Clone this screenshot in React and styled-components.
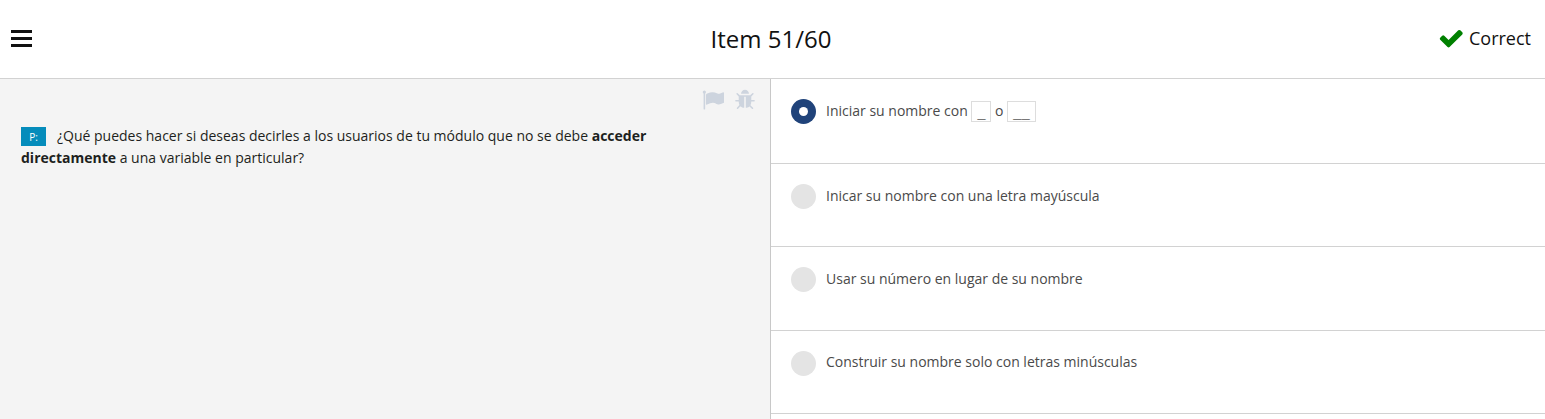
import React from "react";
import styled, { createGlobalStyle } from "styled-components";

const GlobalStyle = createGlobalStyle`
  * { box-sizing: border-box; }
  body {
    margin: 0;
    background: #fff;
    color: #1d1f20;
    font-family: "Open Sans", "Noto Sans", sans-serif;
    overflow: hidden;
  }
`;

const Page = styled.div`
  display: flex;
  flex-direction: column;
  height: 100vh;
`;

const Header = styled.header`
  display: grid;
  grid-template-columns: 1fr auto 1fr;
  align-items: center;
  flex: none;
  height: 79px;
  padding: 0 14px 0 11px;
  border-bottom: 1px solid #d2d2d2;
`;

const MenuButton = styled.button`
  display: flex;
  flex-direction: column;
  gap: 4px;
  width: 21px;
  padding: 0;
  margin-bottom: 1px;
  border: 0;
  background: none;
`;

const MenuBar = styled.span`
  height: 3px;
  background: #111;
`;

const Title = styled.h1`
  margin: 0;
  font-size: 24px;
  font-weight: 400;
  line-height: 32px;
  color: #111;
`;

const Result = styled.div`
  display: flex;
  align-items: center;
  justify-content: flex-end;
  gap: 4px;
  margin-bottom: 2px;
  font-size: 18px;
  line-height: 24px;
  color: #111;
`;

const Icon = styled.svg`
  display: block;
  flex: none;
  width: ${(p) => p.$size}px;
  height: ${(p) => p.$size}px;
  fill: ${(p) => p.$color};
`;

const Content = styled.main`
  display: grid;
  grid-template-columns: 771px 1fr;
  flex: 1;
  min-height: 0;
`;

const QuestionPanel = styled.section`
  padding: 10px 14px 0 21px;
  border-right: 1px solid #c8c8c8;
  background: #f4f4f4;
`;

const Tools = styled.div`
  display: flex;
  justify-content: flex-end;
  gap: 10px;
  height: 36px;
`;

const Question = styled.p`
  width: 640px;
  margin: 0;
  font-size: 14px;
  line-height: 22px;
`;

const Tag = styled.span`
  display: inline-block;
  width: 25px;
  height: 19px;
  margin-right: 11px;
  background: #058cbb;
  color: #fff;
  font-size: 10px;
  line-height: 20px;
  text-align: center;
  vertical-align: 0;
`;

const Answers = styled.ul`
  margin: 0;
  padding: 0;
  list-style: none;
  overflow: hidden;
`;

const Answer = styled.li`
  display: flex;
  align-items: flex-start;
  gap: 10px;
  height: 83.33px;
  padding: 20px 20px 0;
  border-bottom: 1px solid #d2d2d2;
  &:first-child { height: 85px; }
`;

const Radio = styled.span`
  display: flex;
  align-items: center;
  justify-content: center;
  flex: none;
  width: 25px;
  height: 25px;
  border-radius: 50%;
  background: ${(p) => (p.$checked ? "#20437a" : "#e4e4e4")};
  &::after {
    content: "";
    width: 9px;
    height: 9px;
    border-radius: 50%;
    background: ${(p) => (p.$checked ? "#fff" : "transparent")};
  }
`;

const AnswerText = styled.span`
  margin-top: -0.3px;
  font-size: 14px;
  line-height: 23px;
  color: #4a4a4a;
`;

const Code = styled.code`
  display: inline-block;
  height: 21px;
  padding: 0 4.8px;
  border: 1px solid #ddd;
  color: #000;
  font-family: "DejaVu Sans Mono", monospace;
  font-size: 14px;
  line-height: 19px;
  vertical-align: 0;
`;

const CheckIcon = () => (
  <Icon $size={26.5} $color="#008000" viewBox="0 0 1792 1792">
    <path d="M1671 566q0 40-28 68l-724 724-136 136q-28 28-68 28t-68-28l-136-136-362-362q-28-28-28-68t28-68l136-136q28-28 68-28t68 28l294 295 656-657q28-28 68-28t68 28l136 136q28 28 28 68z" />
  </Icon>
);

const FlagIcon = () => (
  <Icon $size={22} $color="#cdd4de" viewBox="0 0 1792 1792">
    <path d="M320 256q0 72-64 110v1266q0 13-9.500 22.500t-22.500 9.500h-64q-13 0-22.500-9.500t-9.500-22.500v-1266q-64-38-64-110 0-53 37.500-90.500t90.500-37.500 90.500 37.500 37.500 90.500zm1472 64v763q0 25-12.500 38.500t-39.500 27.500q-215 116-369 116-61 0-123.500-22t-108.500-48-115.500-48-142.500-22q-192 0-464 146-17 9-33 9-26 0-45-19t-19-45v-742q0-32 31-55 21-14 79-43 236-120 421-120 107 0 200 29t219 88q38 19 88 19 54 0 117.500-21t110-47 88-47 54.500-21q26 0 45 19t19 45z" />
  </Icon>
);

const BugIcon = () => (
  <Icon $size={22} $color="#cdd4de" viewBox="0 0 1792 1792">
    <path d="M1696 960q0 26-19 45t-45 19h-224q0 171-67 290l208 209q19 19 19 45t-19 45q-18 19-45 19t-45-19l-198-197q-5 5-15 13t-42 28.500-65 36.500-82 29-97 13v-896h-128v896q-51 0-101.500-13.500t-87-33-66-39-43.500-32.500l-15-14-183 207q-20 21-48 21-24 0-43-16-19-18-20.500-44.500t15.500-46.500l202-227q-58-114-58-274h-224q-26 0-45-19t-19-45 19-45 45-19h224v-294l-173-173q-19-19-19-45t19-45 45-19 45 19l173 173h844l173-173q19-19 45-19t45 19 19 45-19 45l-173 173v294h224q26 0 45 19t19 45zm-480-576h-640q0-133 93.500-226.500t226.500-93.500 226.500 93.500 93.500 226.500z" />
  </Icon>
);

const answers = [
  { text: <>Iniciar su nombre con <Code>_</Code> o <Code>__</Code></>, checked: true },
  { text: "Inicar su nombre con una letra mayúscula" },
  { text: "Usar su número en lugar de su nombre" },
  { text: "Construir su nombre solo con letras minúsculas" },
];

export default function App() {
  return (
    <Page>
      <GlobalStyle />
      <Header>
        <MenuButton aria-label="Menu">
          <MenuBar />
          <MenuBar />
          <MenuBar />
        </MenuButton>
        <Title>Item 51/60</Title>
        <Result>
          <CheckIcon />
          Correct
        </Result>
      </Header>
      <Content>
        <QuestionPanel>
          <Tools>
            <FlagIcon />
            <BugIcon />
          </Tools>
          <Question>
            <Tag>P:</Tag>
            ¿Qué puedes hacer si deseas decirles a los usuarios de tu módulo que no se debe{" "}
            <b>acceder directamente</b> a una variable en particular?
          </Question>
        </QuestionPanel>
        <Answers>
          {answers.map((a, i) => (
            <Answer key={i}>
              <Radio $checked={a.checked} />
              <AnswerText>{a.text}</AnswerText>
            </Answer>
          ))}
        </Answers>
      </Content>
    </Page>
  );
}
